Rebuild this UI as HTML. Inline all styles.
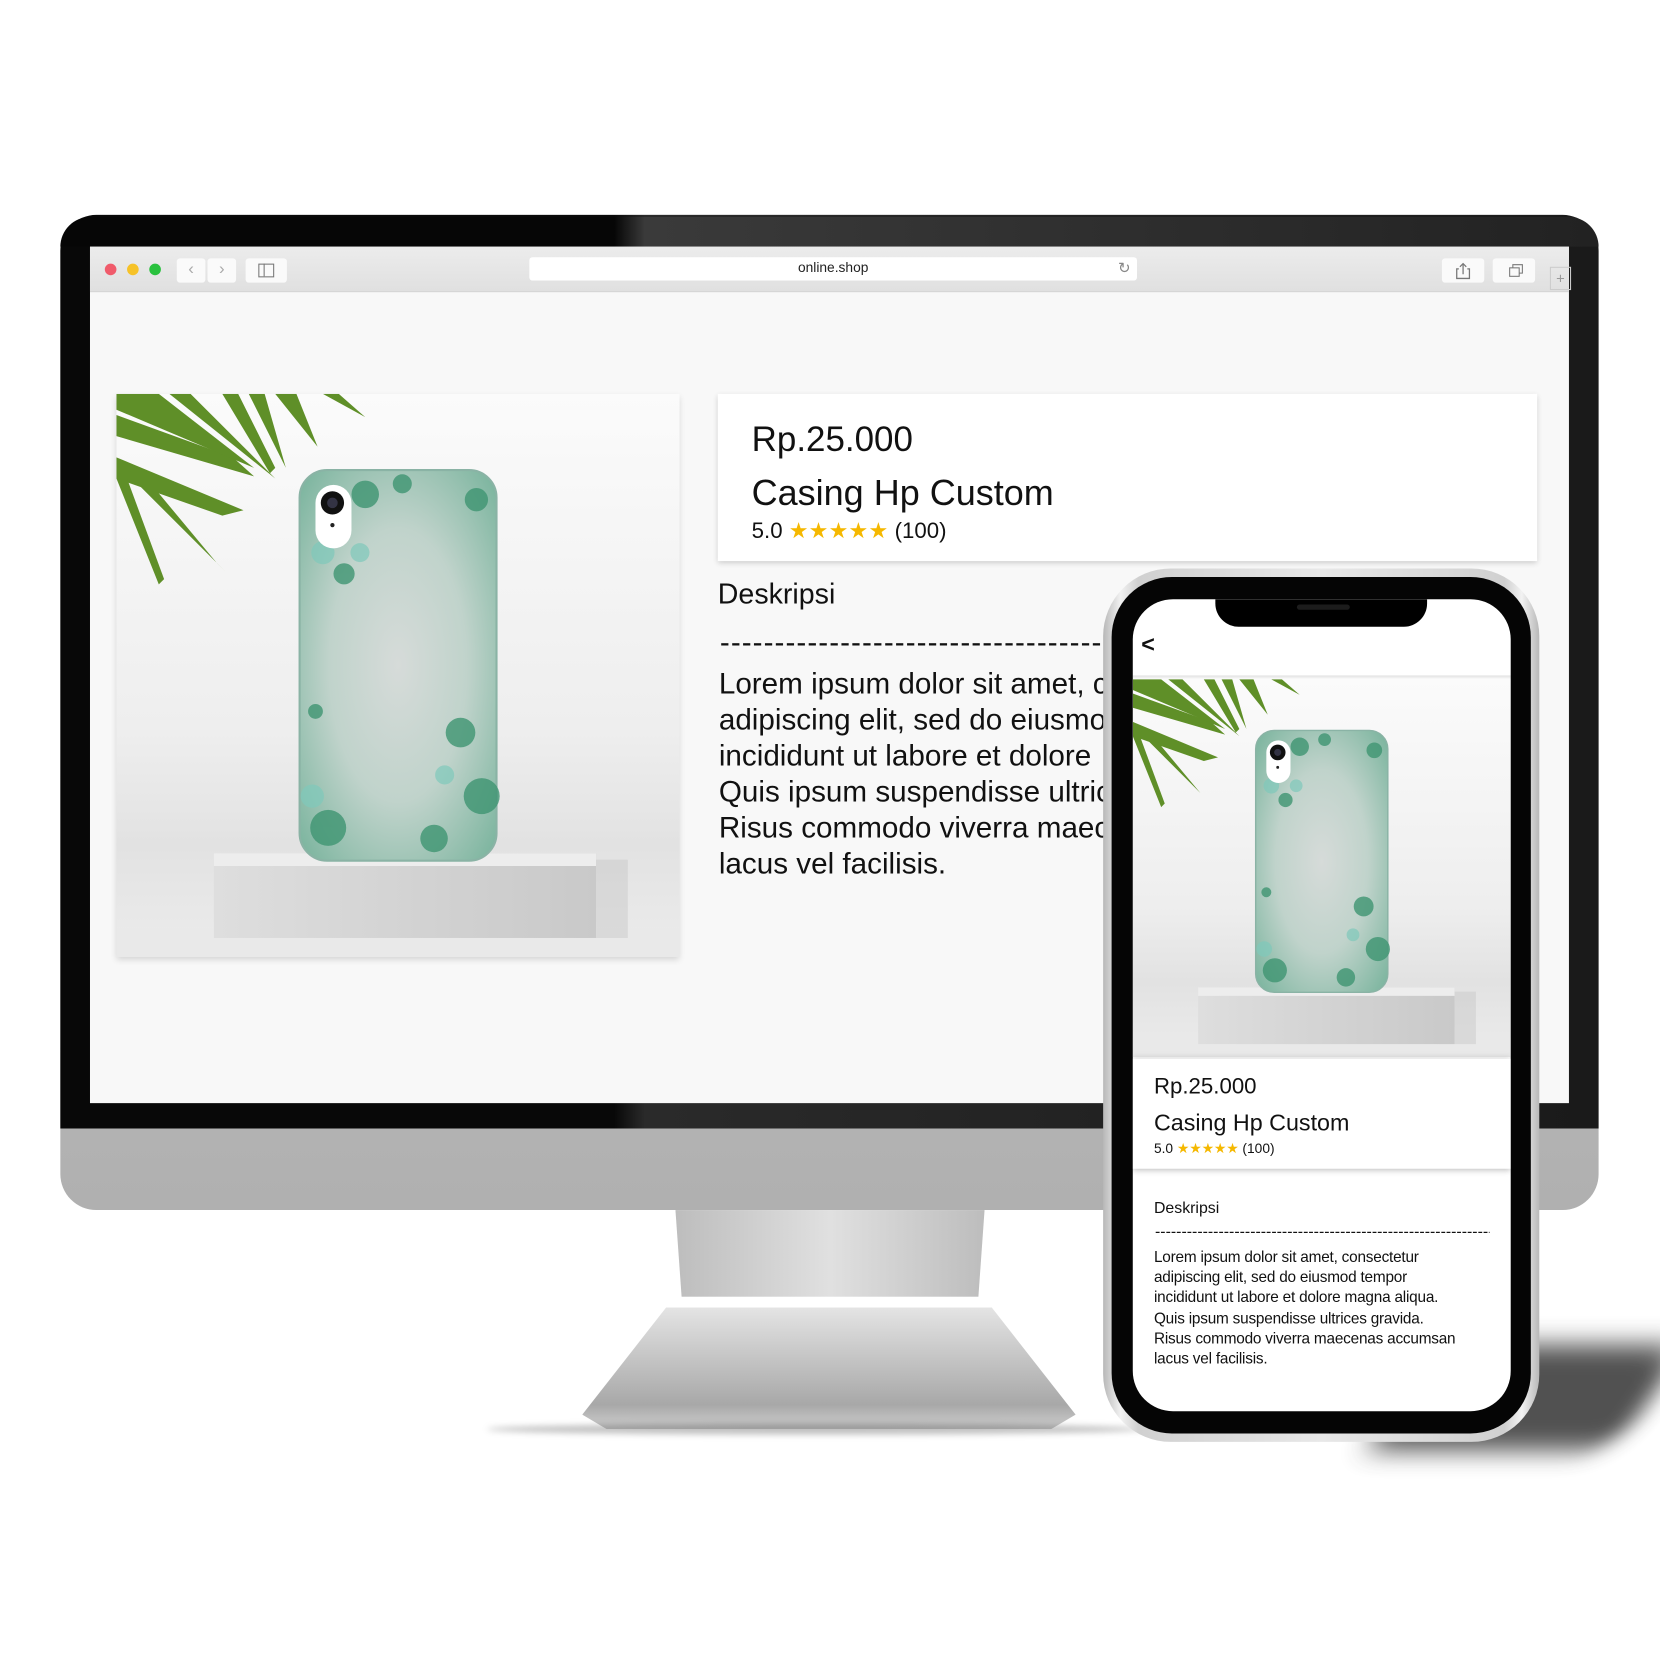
<!DOCTYPE html>
<html><head><meta charset="utf-8"><style>
html,body{margin:0;padding:0;background:#fff;width:1660px;height:1660px;overflow:hidden}
#w{position:absolute;left:0;top:0;width:1568px;height:1568px;transform:scale(1.05867);transform-origin:0 0;font-family:"Liberation Sans",sans-serif;color:#111}
.abs{position:absolute}
</style></head><body>
<svg width="0" height="0" style="position:absolute">
<defs>
<linearGradient id="bg" x1="0" y1="0" x2="0" y2="1"><stop offset="0" stop-color="#fbfbfb"/><stop offset=".6" stop-color="#eeeeee"/><stop offset=".8" stop-color="#e2e2e2"/><stop offset="1" stop-color="#ececec"/></linearGradient>
<radialGradient id="cs" cx=".5" cy=".5" r=".7"><stop offset="0" stop-color="#d6dbd9"/><stop offset=".5" stop-color="#c0d3cb"/><stop offset="1" stop-color="#78b39c"/></radialGradient>
<linearGradient id="pd" x1="0" y1="0" x2="1" y2="0"><stop offset="0" stop-color="#dedede"/><stop offset=".5" stop-color="#d3d3d3"/><stop offset="1" stop-color="#c9c9c9"/></linearGradient>
<symbol id="prod" viewBox="0 0 532 532">
<rect width="532" height="532" fill="url(#bg)"/>
<rect x="0" y="505" width="532" height="27" fill="#e9e9e9"/>
<g fill="#5f8f28">
<polygon points="0,20 110,60 130,78 0,40"/>
<polygon points="0,60 120,110 100,115 0,80"/>
<polygon points="0,80 40,180 45,175 10,80"/>
<polygon points="10,75 105,170 95,160 20,70"/>
<polygon points="50,0 150,80 140,70 70,0"/>
<polygon points="100,0 145,75 150,70 115,0"/>
<polygon points="125,0 160,70 140,0"/>
<polygon points="150,0 190,50 170,0"/>
<polygon points="195,0 235,22 210,0"/>
<polygon points="0,0 40,0 130,70 0,15"/>
</g>
<rect x="92" y="434" width="361" height="80" fill="url(#pd)"/>
<rect x="92" y="434" width="361" height="12" fill="#ededed"/>
<rect x="453" y="440" width="30" height="74" fill="#bdbdbd" opacity=".35"/>
<rect x="173" y="72" width="186" height="369" rx="26" fill="url(#cs)"/>
<rect x="173" y="72" width="186" height="369" rx="26" fill="none" stroke="#8ab3a5" stroke-width="2"/>
<g fill="#3f9572" opacity=".8">
<circle cx="235" cy="95" r="13"/><circle cx="340" cy="100" r="11"/><circle cx="215" cy="170" r="10"/><circle cx="325" cy="320" r="14"/><circle cx="345" cy="380" r="17"/><circle cx="200" cy="410" r="17"/><circle cx="300" cy="420" r="13"/><circle cx="188" cy="300" r="7"/><circle cx="270" cy="85" r="9"/>
</g>
<g fill="#7fc9bb" opacity=".7"><circle cx="195" cy="150" r="11"/><circle cx="230" cy="150" r="9"/><circle cx="310" cy="360" r="9"/><circle cx="185" cy="380" r="11"/></g>
<rect x="188" y="86" width="34" height="60" rx="17" fill="#fff"/>
<circle cx="204" cy="103" r="11" fill="#111"/><circle cx="204" cy="103" r="5" fill="#334"/>
<circle cx="204" cy="124" r="2" fill="#222"/>
</symbol>
</defs></svg>
<div id="w">
<div class="abs" style="left:57px;top:203px;width:1453px;height:940px;border-radius:34px;background:linear-gradient(#c9c9c9,#b0b0b0);"></div>
<div class="abs" style="left:57px;top:203px;width:1453px;height:863px;border-radius:34px 34px 0 0;background:linear-gradient(90deg,#080808 0,#080808 36%,#2a2a2a 38%,#1a1a1a 100%);"></div>
<div class="abs" style="left:57px;top:205px;width:1453px;height:28px;border-radius:34px 34px 0 0;background:linear-gradient(90deg,#060606 36%,#3a3a3a 38%,#222 100%)"></div>
<div class="abs" style="left:85px;top:233px;width:1397px;height:809px;background:#f8f8f8"></div>
<div class="abs" style="left:85px;top:233px;width:1397px;height:42px;background:linear-gradient(#ececec,#e0e0e0);border-bottom:1px solid #d2d2d2"></div>
<div class="abs" style="left:99px;top:249px;width:11px;height:11px;border-radius:50%;background:#f05b6b"></div>
<div class="abs" style="left:120px;top:249px;width:11px;height:11px;border-radius:50%;background:#f6c228"></div>
<div class="abs" style="left:141px;top:249px;width:11px;height:11px;border-radius:50%;background:#29c13e"></div>
<div class="abs" style="left:167px;top:244px;width:27px;height:23px;background:#fafafa;border-radius:3px;color:#aaa;font-size:16px;text-align:center;line-height:22px">&lsaquo;</div>
<div class="abs" style="left:196px;top:244px;width:27px;height:23px;background:#fafafa;border-radius:3px;color:#aaa;font-size:16px;text-align:center;line-height:22px">&rsaquo;</div>
<div class="abs" style="left:232px;top:244px;width:39px;height:23px;background:#fafafa;border-radius:3px"><div style="position:absolute;left:12px;top:5px;width:13px;height:11px;border:1px solid #777"></div><div style="position:absolute;left:17px;top:5px;width:1px;height:12px;background:#777"></div></div>
<div class="abs" style="left:500px;top:243px;width:574px;height:22px;background:#fff;border-radius:3px;font-size:13px;text-align:center;line-height:20px;color:#222">online.shop</div>
<div class="abs" style="left:1056px;top:245px;font-size:14px;color:#888">&#8635;</div>
<div class="abs" style="left:1362px;top:244px;width:40px;height:23px;background:#fafafa;border-radius:3px"><svg width="40" height="23"><path d="M16 10h-2v9h12v-9h-2M20 15V5M17 8l3-3 3 3" fill="none" stroke="#777" stroke-width="1.2"/></svg></div>
<div class="abs" style="left:1410px;top:244px;width:40px;height:23px;background:#fafafa;border-radius:3px"><svg width="40" height="23"><rect x="16" y="9" width="9" height="8" fill="none" stroke="#777"/><path d="M19 9V6h9v8h-3" fill="none" stroke="#777"/></svg></div>
<div class="abs" style="left:1464px;top:252px;width:18px;height:20px;border:1px solid #ccc;color:#999;font-size:14px;text-align:center;line-height:20px">+</div>
<svg class="abs" style="left:110px;top:372px;box-shadow:0 3px 6px rgba(0,0,0,.15)" width="532" height="532"><use href="#prod"/></svg>
<div class="abs" style="left:678px;top:372px;width:774px;height:158px;background:#fff;box-shadow:0 2px 5px rgba(0,0,0,.18)"></div>
<div class="abs" style="left:710px;top:396px;font-size:33px;white-space:nowrap">Rp.25.000</div>
<div class="abs" style="left:710px;top:447px;font-size:34px;white-space:nowrap">Casing Hp Custom</div>
<div class="abs" style="left:710px;top:489px;font-size:21px;white-space:nowrap">5.0 <span style="color:#f5b800">★★★★★</span> (100)</div>
<div class="abs" style="left:678px;top:546px;font-size:27px">Deskripsi</div>
<div class="abs" style="left:680px;top:591px;font-size:28px;letter-spacing:1px;width:370px;overflow:hidden;white-space:nowrap">------------------------------------------</div>
<div class="abs" style="left:679px;top:629px;width:370px;height:210px;overflow:hidden;font-size:28px;line-height:34px;white-space:nowrap">Lorem ipsum dolor sit amet, c<br>adipiscing elit, sed do eiusmod<br>incididunt ut labore et dolore<br>Quis ipsum suspendisse ultrices<br>Risus commodo viverra maecenas<br>lacus vel facilisis.</div>
<div class="abs" style="left:638px;top:1143px;width:292px;height:82px;background:linear-gradient(90deg,#bdbdbd,#e0e0e0 50%,#bdbdbd);clip-path:polygon(0 0,100% 0,98% 100%,2% 100%)"></div>
<div class="abs" style="left:550px;top:1235px;width:466px;height:115px;background:linear-gradient(#e4e4e4,#a8a8a8 80%,#d0d0d0);clip-path:polygon(17% 0,83% 0,100% 88%,95% 100%,5% 100%,0 88%)"></div>
<div class="abs" style="left:460px;top:1345px;width:620px;height:10px;border-radius:50%;background:rgba(0,0,0,.25);filter:blur(3px)"></div>
<div class="abs" style="left:1320px;top:1270px;width:240px;height:100px;background:#333;filter:blur(12px);transform:skewX(-35deg);border-radius:30px;opacity:.85"></div>
<div class="abs" style="left:1042px;top:537px;width:412px;height:825px;border-radius:64px;background:linear-gradient(90deg,#b8b8b8,#f2f2f2 4%,#d0d0d0 8%,#e8e8e8 50%,#d0d0d0 92%,#f2f2f2 96%,#b8b8b8)"></div>
<div class="abs" style="left:1050px;top:545px;width:396px;height:809px;border-radius:57px;background:#050505"></div>
<div class="abs" style="left:1070px;top:566px;width:357px;height:767px;border-radius:38px;background:#fff;overflow:hidden">
  <div style="position:absolute;left:78px;top:0;width:200px;height:26px;background:#000;border-radius:0 0 22px 22px"></div>
  <div style="position:absolute;left:155px;top:5px;width:50px;height:5px;background:#1c1c1c;border-radius:3px"></div>
  <div style="position:absolute;left:8px;top:30px;font-size:22px;font-weight:bold">&lt;</div>
  <svg style="position:absolute;left:0;top:74px" width="357" height="360" viewBox="0 0 532 537" preserveAspectRatio="none"><use href="#prod" width="532" height="537"/></svg>
  <div style="position:absolute;left:0;top:72px;width:357px;height:4px;background:linear-gradient(rgba(0,0,0,.12),transparent)"></div>
  <div style="position:absolute;left:0;top:434px;width:357px;height:104px;background:#fff;box-shadow:0 2px 5px rgba(0,0,0,.2),0 -2px 5px rgba(0,0,0,.1)"></div>
  <div style="position:absolute;left:20px;top:449px;font-size:21px;white-space:nowrap">Rp.25.000</div>
  <div style="position:absolute;left:20px;top:482px;font-size:22px;white-space:nowrap">Casing Hp Custom</div>
  <div style="position:absolute;left:20px;top:511px;font-size:13px;white-space:nowrap">5.0 <span style="color:#f5b800">★★★★★</span> (100)</div>
  <div style="position:absolute;left:20px;top:567px;font-size:15px">Deskripsi</div>
  <div style="position:absolute;left:21px;top:589px;width:316px;overflow:hidden;font-size:15px;white-space:nowrap">----------------------------------------------------------------</div>
  <div style="position:absolute;left:20px;top:613px;font-size:14.5px;line-height:19.2px;white-space:nowrap;letter-spacing:-.2px">Lorem ipsum dolor sit amet, consectetur<br>adipiscing elit, sed do eiusmod tempor<br>incididunt ut labore et dolore magna aliqua.<br>Quis ipsum suspendisse ultrices gravida.<br>Risus commodo viverra maecenas accumsan<br>lacus vel facilisis.</div>
</div>
</div>
</body></html>
